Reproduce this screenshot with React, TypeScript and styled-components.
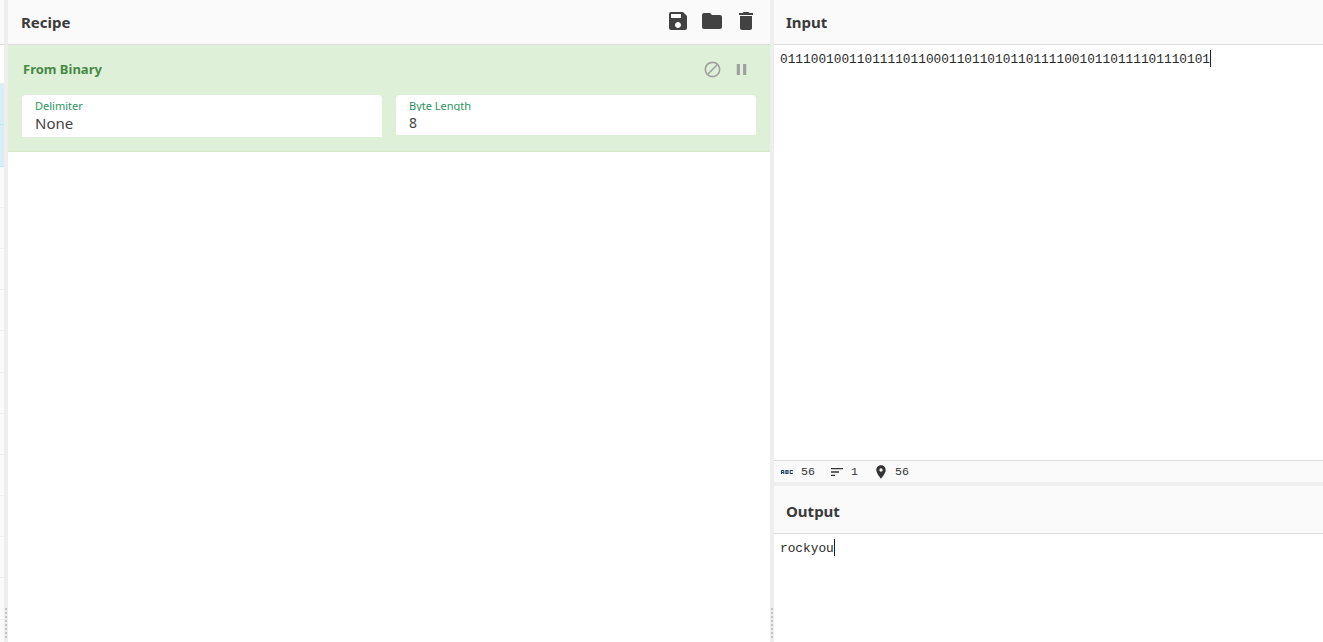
import { createGlobalStyle, styled } from "styled-components";
import {
  MdAbc,
  MdBlock,
  MdDelete,
  MdFolder,
  MdLocationOn,
  MdPause,
  MdSave,
  MdSort,
} from "react-icons/md";

const GlobalStyle = createGlobalStyle`
  html, body {
    margin: 0;
    height: 100%;
    overflow: hidden;
    background: #fff;
    font-family: "Noto Sans", "Open Sans", sans-serif;
    color: #333;
  }
  * { box-sizing: border-box; }
`;

const Page = styled.div`
  display: grid;
  grid-template-columns: 4px 4px 762px 4px 1fr;
  width: 1323px;
  height: 642px;
  overflow: hidden;
`;

const OpList = styled.div`
  display: flex;
  flex-direction: column;
  overflow: hidden;
`;

const OpHeader = styled.div`
  flex: none;
  height: 45px;
  background: #fafafa;
  border-bottom: 1px solid #ddd;
`;

const OpRow = styled.div<{ $tone: "plain" | "active" | "muted"; $height?: number }>`
  flex: none;
  height: ${(p) => p.$height ?? 41.2}px;
  background: ${(p) =>
    p.$tone === "active" ? "#d9edf7" : p.$tone === "muted" ? "#fafafa" : "#fff"};
  border-bottom: 1px solid ${(p) => (p.$tone === "active" ? "#bce8f1" : "#eee")};
`;

const Gutter = styled.div`
  position: relative;
  background: #eee;
`;

const GutterGrip = styled.div`
  position: absolute;
  left: 1px;
  bottom: 4px;
  width: 2px;
  height: 30px;
  background: repeating-linear-gradient(to bottom, #c4c4c4 0 2px, transparent 2px 4px);
`;

const Panel = styled.section`
  display: flex;
  flex-direction: column;
  min-width: 0;
  min-height: 0;
`;

const Column = styled.div`
  display: flex;
  flex-direction: column;
  min-width: 0;
  height: 642px;
`;

const PanelHeader = styled.header<{ $height: number; $left: number; $top?: number }>`
  display: flex;
  align-items: center;
  justify-content: space-between;
  flex: none;
  height: ${(p) => p.$height}px;
  padding: ${(p) => p.$top ?? 0}px 12px 0 ${(p) => p.$left}px;
  background: #fafafa;
  border-bottom: 1px solid #ddd;
`;

const PanelTitle = styled.h2`
  margin: 0;
  font-size: 15px;
  font-weight: 700;
  color: #3a3a3a;
`;

const HeaderIcons = styled.div`
  display: flex;
  gap: 10px;
  margin-top: -2px;
  color: #424242;
  font-size: 24px;
  line-height: 0;
`;

const RecipeBody = styled.div`
  flex: 1;
  background: #fff;
`;

const Operation = styled.div`
  height: 107px;
  padding: 0 14px;
  background: #dff0d8;
  border-bottom: 1px solid #d6e9c6;
`;

const OperationTop = styled.div`
  display: flex;
  align-items: center;
  justify-content: space-between;
  height: 50px;
  padding-bottom: 2px;
`;

const OperationName = styled.div`
  margin-left: 1px;
  font-size: 13px;
  font-weight: 700;
  color: #468847;
`;

const OperationIcons = styled.div`
  display: flex;
  align-items: center;
  gap: 10px;
  margin-right: 5px;
  color: #a0a0a0;
  font-size: 19px;
  line-height: 0;
`;

const Fields = styled.div`
  display: grid;
  grid-template-columns: 360px 360px;
  gap: 14px;
`;

const Field = styled.div<{ $height: number }>`
  height: ${(p) => p.$height}px;
  padding: 3px 13px 0;
  background: #fff;
  border-radius: 4px 4px 0 0;
  overflow: hidden;
`;

const FieldLabel = styled.div`
  height: 13px;
  overflow: hidden;
  font-size: 11px;
  line-height: 15px;
  color: #2a9560;
`;

const FieldValue = styled.div<{ $size: number }>`
  margin-top: 1px;
  font-size: ${(p) => p.$size}px;
  line-height: 22px;
  color: #424242;
`;

const Editor = styled.div<{ $height: number; $top: number }>`
  flex: none;
  height: ${(p) => p.$height}px;
  padding: ${(p) => p.$top}px 6px 0;
  background: #fff;
  font-family: "Liberation Mono", monospace;
  font-size: 12.8px;
  line-height: 15px;
  color: #2a2a2a;
`;

const Caret = styled.span`
  display: inline-block;
  width: 1px;
  height: 17px;
  margin-bottom: -4px;
  background: #222;
`;

const StatusBar = styled.div`
  display: flex;
  align-items: center;
  flex: none;
  height: 22px;
  padding-left: 5px;
  background: #fafafa;
  border-top: 1px solid #ddd;
  font-family: "Liberation Mono", monospace;
  font-size: 11.6px;
  color: #333;
`;

const StatusItem = styled.span<{ $width: number }>`
  display: inline-flex;
  align-items: center;
  gap: 6px;
  width: ${(p) => p.$width}px;
`;

const StatusIcon = styled.span<{ $color?: string }>`
  display: inline-flex;
  font-size: 16px;
  color: ${(p) => p.$color ?? "#333"};
`;

const Divider = styled.div`
  flex: none;
  height: 4px;
  background: #eee;
`;

const mutedRows = Array.from({ length: 12 }, (_, i) => i);

const App = () => {
  return (
    <>
      <GlobalStyle />
      <Page>
        <OpList>
          <OpHeader />
          <OpRow $tone="plain" $height={39.2} />
          <OpRow $tone="active" />
          <OpRow $tone="active" />
          {mutedRows.map((i) => (
            <OpRow key={i} $tone="muted" />
          ))}
        </OpList>
        <Gutter>
          <GutterGrip />
        </Gutter>
        <Panel>
          <PanelHeader $height={45} $left={13}>
            <PanelTitle>Recipe</PanelTitle>
            <HeaderIcons>
              <MdSave />
              <MdFolder />
              <MdDelete />
            </HeaderIcons>
          </PanelHeader>
          <RecipeBody>
            <Operation>
              <OperationTop>
                <OperationName>From Binary</OperationName>
                <OperationIcons>
                  <MdBlock />
                  <MdPause />
                </OperationIcons>
              </OperationTop>
              <Fields>
                <Field $height={42}>
                  <FieldLabel>Delimiter</FieldLabel>
                  <FieldValue $size={15}>None</FieldValue>
                </Field>
                <Field $height={40}>
                  <FieldLabel>Byte Length</FieldLabel>
                  <FieldValue $size={14}>8</FieldValue>
                </Field>
              </Fields>
            </Operation>
          </RecipeBody>
        </Panel>
        <Gutter>
          <GutterGrip />
        </Gutter>
        <Column>
          <PanelHeader $height={45} $left={12}>
            <PanelTitle>Input</PanelTitle>
          </PanelHeader>
          <Editor $height={415} $top={5}>
            01110010011011110110001101101011011110010110111101110101
            <Caret />
          </Editor>
          <StatusBar>
            <StatusItem $width={50}>
              <StatusIcon $color="#1d3f72">
                <MdAbc />
              </StatusIcon>
              56
            </StatusItem>
            <StatusItem $width={44}>
              <StatusIcon>
                <MdSort />
              </StatusIcon>
              1
            </StatusItem>
            <StatusItem $width={50}>
              <StatusIcon>
                <MdLocationOn />
              </StatusIcon>
              56
            </StatusItem>
          </StatusBar>
          <Divider />
          <PanelHeader $height={48} $left={12} $top={2}>
            <PanelTitle>Output</PanelTitle>
          </PanelHeader>
          <Editor $height={108} $top={5}>
            rockyou
            <Caret />
          </Editor>
        </Column>
      </Page>
    </>
  );
};

export default App;
